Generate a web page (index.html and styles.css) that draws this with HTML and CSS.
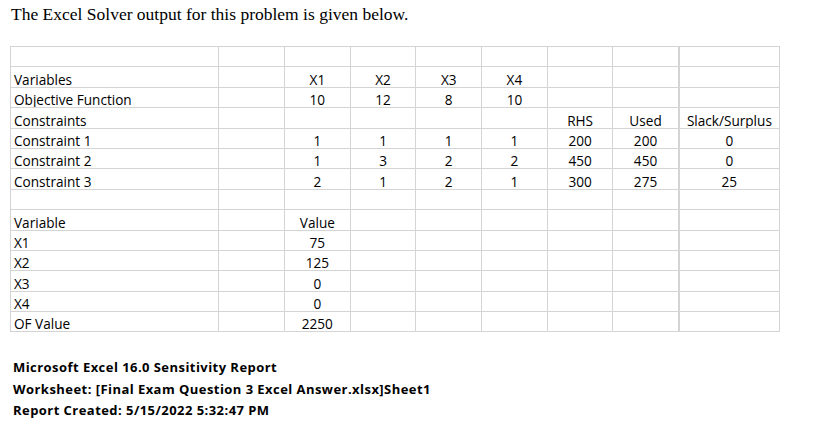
FILE: index.html
```html
<!DOCTYPE html>
<html>
<head>
<meta charset="utf-8">
<link rel="stylesheet" href="styles.css">
</head>
<body>
<p class="intro">The Excel Solver output for this problem is given below.</p>
<table class="sheet">
  <colgroup>
    <col class="c-a"><col class="c-b"><col class="c-n"><col class="c-n"><col class="c-n"><col class="c-n"><col class="c-n"><col class="c-n"><col class="c-i">
  </colgroup>
  <tr><td></td><td></td><td></td><td></td><td></td><td></td><td></td><td></td><td class="thick"></td></tr>
  <tr><td>Variables</td><td></td><td class="n">X1</td><td class="n">X2</td><td class="n">X3</td><td class="n">X4</td><td></td><td></td><td class="thick"></td></tr>
  <tr><td>Objective Function</td><td></td><td class="n">10</td><td class="n">12</td><td class="n">8</td><td class="n">10</td><td></td><td></td><td class="thick"></td></tr>
  <tr><td>Constraints</td><td></td><td></td><td></td><td></td><td></td><td class="n">RHS</td><td class="n">Used</td><td class="n thick">Slack/Surplus</td></tr>
  <tr><td>Constraint 1</td><td></td><td class="n">1</td><td class="n">1</td><td class="n">1</td><td class="n">1</td><td class="n">200</td><td class="n">200</td><td class="n thick">0</td></tr>
  <tr><td>Constraint 2</td><td></td><td class="n">1</td><td class="n">3</td><td class="n">2</td><td class="n">2</td><td class="n">450</td><td class="n">450</td><td class="n thick">0</td></tr>
  <tr><td>Constraint 3</td><td></td><td class="n">2</td><td class="n">1</td><td class="n">2</td><td class="n">1</td><td class="n">300</td><td class="n">275</td><td class="n thick">25</td></tr>
  <tr><td></td><td></td><td></td><td></td><td></td><td></td><td></td><td></td><td class="thick"></td></tr>
  <tr><td>Variable</td><td></td><td class="n">Value</td><td></td><td></td><td></td><td></td><td></td><td class="thick"></td></tr>
  <tr><td>X1</td><td></td><td class="n">75</td><td></td><td></td><td></td><td></td><td></td><td class="thick"></td></tr>
  <tr><td>X2</td><td></td><td class="n">125</td><td></td><td></td><td></td><td></td><td></td><td class="thick"></td></tr>
  <tr><td>X3</td><td></td><td class="n">0</td><td></td><td></td><td></td><td></td><td></td><td class="thick"></td></tr>
  <tr><td>X4</td><td></td><td class="n">0</td><td></td><td></td><td></td><td></td><td></td><td class="thick"></td></tr>
  <tr><td>OF Value</td><td></td><td class="n">2250</td><td></td><td></td><td></td><td></td><td></td><td class="thick"></td></tr>
</table>
<div class="report">
  <div>Microsoft Excel 16.0 Sensitivity Report</div>
  <div>Worksheet: [Final Exam Question 3 Excel Answer.xlsx]Sheet1</div>
  <div>Report Created: 5/15/2022 5:32:47 PM</div>
</div>
</body>
</html>
```
FILE: styles.css
```css
html, body {
  margin: 0;
  padding: 0;
  background: #ffffff;
}
body {
  padding: 4px 0 0 10px;
}
.intro {
  margin: 0 0 22px 1px;
  font-family: "Liberation Serif", "Times New Roman", serif;
  font-size: 17.5px;
  line-height: 20px;
  color: #000;
}
.sheet {
  border-collapse: collapse;
  table-layout: fixed;
  width: 769px;
  font-family: "Open Sans", "Noto Sans", sans-serif;
  font-size: 13.6px;
  color: #000;
}
.c-a { width: 208px; }
.c-b { width: 66px; }
.c-n { width: 65.7px; }
.c-i { width: 101px; }
.sheet td {
  border: 1px solid #d4d4d4;
  height: 19.4px;
  padding: 0 3px;
  line-height: 14px;
  vertical-align: bottom;
  white-space: nowrap;
  overflow: hidden;
}
.sheet td.n {
  text-align: center;
}
.sheet td.thick {
  border-left: 2px solid #d4d4d4;
}
.report {
  margin: 25px 0 0 3px;
  font-family: "Open Sans", "Noto Sans", sans-serif;
  font-weight: bold;
  font-size: 13px;
  letter-spacing: 0.45px;
  line-height: 21.5px;
  color: #000;
}
```
